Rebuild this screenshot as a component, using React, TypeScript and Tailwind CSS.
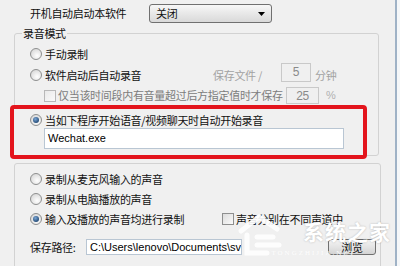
import React from "react";

const Radio = ({ on }: { on?: boolean }) => (
  <svg width="12" height="12" viewBox="0 0 12 12" className="flex-none">
    <defs>
      <radialGradient id="rb" cx="0.6" cy="0.65" r="0.7">
        <stop offset="0" stopColor="#ffffff" />
        <stop offset="1" stopColor="#d6d6d6" />
      </radialGradient>
      <radialGradient id="rd" cx="0.4" cy="0.35" r="0.7">
        <stop offset="0" stopColor="#7aa6d6" />
        <stop offset="1" stopColor="#1d446f" />
      </radialGradient>
    </defs>
    <circle cx="6" cy="6" r="5.5" fill="url(#rb)" stroke="#8e8f8f" />
    {on && <circle cx="6" cy="6" r="3" fill="url(#rd)" />}
  </svg>
);

const Check = ({ dim }: { dim?: boolean }) => (
  <span
    className={
      dim
        ? "flex-none w-[12px] h-[12px] border border-[#b8b8b8] bg-linear-to-br from-[#e9e9e9] to-[#fafafa]"
        : "flex-none w-[12px] h-[12px] border border-[#8e8f8f] bg-linear-to-br from-[#dcdcdc] to-[#fbfbfb]"
    }
  />
);

export default function App() {
  return (
    <div className="relative w-[400px] h-[266px] overflow-hidden flex bg-[#f0f0f0] text-[11px] tracking-[-0.3px] text-[#111] font-['Noto_Sans_CJK_SC',sans-serif]">
      <div className="w-[395px] flex-none flex flex-col">
        {/* startup option */}
        <div className="flex items-center pl-[30px] mt-[4px] h-[19px]">
          <span className="w-[119px] flex-none">开机自动启动本软件</span>
          <div className="w-[123px] h-[19px] flex-none flex items-center px-[6px] border border-[#707070] rounded-[3px] bg-linear-to-b from-[#f7f7f7] to-[#d9d9d9]">
            <span className="flex-1">关闭</span>
            <svg width="7" height="4" viewBox="0 0 7 4">
              <path d="M0 0h7L3.5 4z" fill="#000" />
            </svg>
          </div>
        </div>

        {/* 录音模式 */}
        <fieldset className="ml-[14px] mt-[2px] w-[365px] border border-[#d2d2d2] rounded-[3px]">
          <legend className="ml-[7px] px-[1px] leading-[16px]">录音模式</legend>

          <div className="flex items-center h-[20px] mt-[3px] pl-[15px] gap-[3px]">
            <Radio />
            <span>手动录制</span>
          </div>

          <div className="flex items-center h-[22px] pl-[15px] gap-[3px]">
            <Radio />
            <span className="w-[165px] flex-none whitespace-nowrap">软件启动后自动录音</span>
            <span className="w-[65px] flex-none text-[#a2a2a2] whitespace-nowrap">保存文件 /</span>
            <span className="w-[30px] h-[19px] mb-[6px] flex-none flex items-center justify-center border border-[#c9c9c9] text-[#8a8a8a] font-['Liberation_Sans',sans-serif] text-[12px]">
              5
            </span>
            <span className="ml-[1px] text-[#a2a2a2]">分钟</span>
          </div>

          <div className="flex items-center h-[19px] pl-[29px] gap-[2px]">
            <Check dim />
            <span className="w-[226px] flex-none whitespace-nowrap text-[#7c7c7c]">
              仅当该时间段内有音量超过后方指定值时才保存
            </span>
            <span className="w-[33px] h-[17px] flex-none flex items-center justify-center border border-[#c9c9c9] text-[#8a8a8a] font-['Liberation_Sans',sans-serif] text-[12px]">
              25
            </span>
            <span className="ml-[5px] text-[#b0b0b0] font-['Liberation_Sans',sans-serif]">%</span>
          </div>

          {/* highlighted option */}
          <div className="relative ml-[-5px] mb-[-4px] w-[357px] border-4 border-[#e3141c] rounded-[4px] bg-[#f0f0f0] pt-[3px] pb-[6px]">
            <div className="flex items-center h-[16px] pl-[16px] gap-[3px]">
              <Radio on />
              <span className="whitespace-nowrap">当如下程序开始语音/视频聊天时自动开始录音</span>
            </div>
            <div className="ml-[30px] w-[300px] h-[21px] flex items-center pl-[3px] bg-white border border-[#b9c6d3] font-['Liberation_Sans',sans-serif] text-[11px] tracking-normal text-black">
              Wechat.exe
            </div>
          </div>
        </fieldset>

        {/* source options */}
        <div className="ml-[14px] mt-[7px] w-[367px] h-[110px] flex-none border border-[#d2d2d2] rounded-[3px]">
          <div className="flex items-center h-[20px] mt-[5px] pl-[15px] gap-[3px]">
            <Radio />
            <span>录制从麦克风输入的声音</span>
          </div>
          <div className="flex items-center h-[20px] pl-[15px] gap-[3px]">
            <Radio />
            <span>录制从电脑播放的声音</span>
          </div>
          <div className="flex items-center h-[20px] pl-[15px] gap-[3px]">
            <Radio on />
            <span className="w-[174px] flex-none whitespace-nowrap">输入及播放的声音均进行录制</span>
            <Check />
            <span className="ml-[-1px] whitespace-nowrap">声音分别在不同声道中</span>
          </div>
          <div className="flex items-center h-[16px] mt-[10px] pl-[15px]">
            <span className="w-[56px] flex-none">保存路径:</span>
            <div className="w-[156px] h-[16px] flex-none flex items-center pl-[3px] overflow-hidden whitespace-nowrap bg-white border border-[#b9c6d3] font-['Liberation_Sans',sans-serif] tracking-normal text-black">
              C:\Users\lenovo\Documents\sv
            </div>
            <button className="ml-[86px] w-[48px] h-[16px] flex-none flex items-center justify-center border border-[#707070] rounded-[3px] bg-linear-to-b from-[#f4f4f4] to-[#d4d4d4]">
              浏览
            </button>
          </div>
        </div>
      </div>

      {/* window edge */}
      <div className="w-[2px] flex-none bg-[#9fb2c6]" />
      <div className="flex-1 bg-[#f5f7f9]" />

      {/* site watermark */}
      <div className="absolute left-[233px] top-[209px] w-[160px] h-[52px] pointer-events-none">
        <svg width="62" height="52" viewBox="0 0 62 52" className="absolute left-0 top-0">
          <g fill="none" stroke="#ffffff" strokeWidth="5" strokeLinecap="round" opacity="0.9">
            <path d="M8 22 L26 8 L44 20" />
            <path d="M14 26 L14 44 L34 44" />
            <path d="M24 28 L40 28" />
            <path d="M24 36 L46 36" />
          </g>
        </svg>
        <span className="absolute left-[70px] top-[12px] text-[21px] font-bold leading-none tracking-[1px] text-white [text-shadow:0_0_2px_rgba(0,0,0,0.25)]">
          系统之家
        </span>
        <span className="absolute left-[27px] top-[41px] text-[7px] leading-none tracking-[2px] text-white opacity-90 font-['Liberation_Serif',serif]">
          XITONGZHIJIA.NET
        </span>
      </div>
    </div>
  );
}
